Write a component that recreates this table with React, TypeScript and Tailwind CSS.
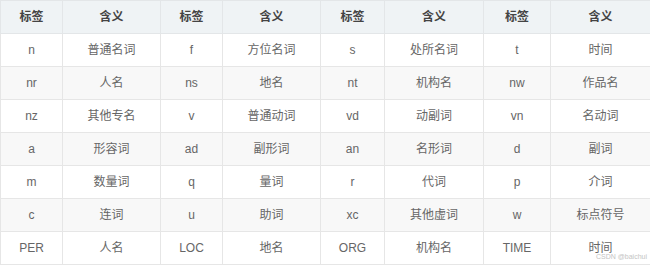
import React from 'react';

const widths = [62, 98, 62, 98, 64, 99, 67, 100];

const rows: string[][] = [
  ['n', '普通名词', 'f', '方位名词', 's', '处所名词', 't', '时间'],
  ['nr', '人名', 'ns', '地名', 'nt', '机构名', 'nw', '作品名'],
  ['nz', '其他专名', 'v', '普通动词', 'vd', '动副词', 'vn', '名动词'],
  ['a', '形容词', 'ad', '副形词', 'an', '名形词', 'd', '副词'],
  ['m', '数量词', 'q', '量词', 'r', '代词', 'p', '介词'],
  ['c', '连词', 'u', '助词', 'xc', '其他虚词', 'w', '标点符号'],
  ['PER', '人名', 'LOC', '地名', 'ORG', '机构名', 'TIME', '时间'],
];

const headers = ['标签', '含义', '标签', '含义', '标签', '含义', '标签', '含义'];

export default function App() {
  return (
    <div
      className="relative w-[650px] h-[265px] bg-white overflow-hidden"
      style={{ fontFamily: '"Liberation Sans", "Noto Sans CJK SC", sans-serif' }}
    >
      <table className="border-collapse table-fixed w-[649px] text-[12px]">
        <colgroup>
          {widths.map((w, i) => (
            <col key={i} style={{ width: w }} />
          ))}
        </colgroup>
        <thead>
          <tr className="bg-[#eff3f5]">
            {headers.map((h, i) => (
              <th
                key={i}
                className="h-[33px] p-0 border border-[#e3e6e8] text-center font-bold text-[#444]"
              >
                {h}
              </th>
            ))}
          </tr>
        </thead>
        <tbody>
          {rows.map((r, ri) => (
            <tr key={ri} className={ri % 2 === 1 ? 'bg-[#f8f8f8]' : 'bg-white'}>
              {r.map((c, ci) => (
                <td
                  key={ci}
                  className="h-[33px] p-0 border border-[#e6e6e6] text-center text-[#666]"
                >
                  {c}
                </td>
              ))}
            </tr>
          ))}
        </tbody>
      </table>
      {/* watermark */}
      <span className="absolute right-[3px] bottom-[5px] text-[7px] leading-none text-[#c4c4c4]">
        CSDN @baichui
      </span>
    </div>
  );
}
